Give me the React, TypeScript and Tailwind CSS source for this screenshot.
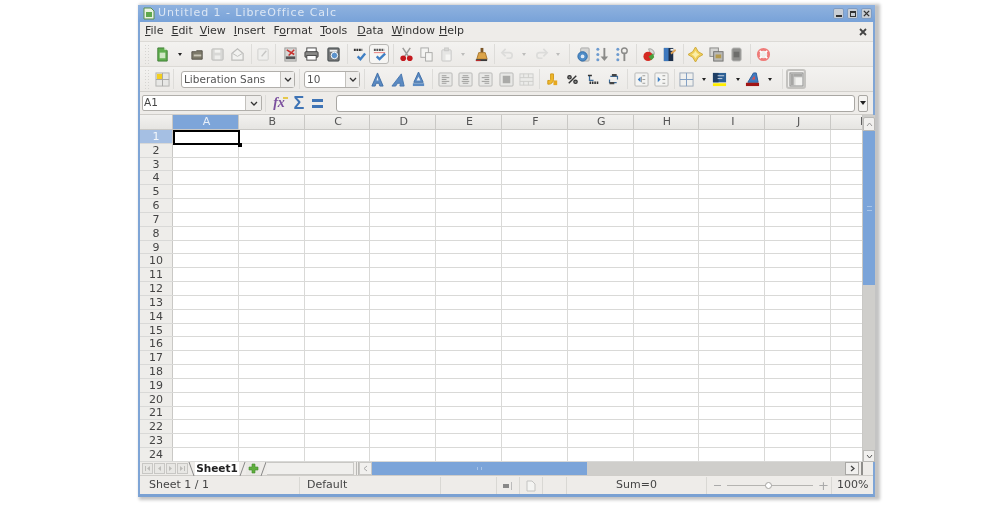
import React from "react";

const S = ({ children }: { children: React.ReactNode }) => (
  <svg width="15" height="15" viewBox="0 0 16 16" fill="none">{children}</svg>
);

const icons: Record<string, React.ReactNode> = {
  newdoc: <S><path d="M3 1h7l3 3v11H3z" fill="#5fae4e" stroke="#3f7d35" /><rect x="5" y="6" width="6" height="6" fill="#cfe8c4" /><path d="M10 0l3 3h-3z" fill="#e8f4e0" /></S>,
  open: <S><path d="M2 5h4l1-1h6v9H2z" fill="#7d7a6a" stroke="#55534a" /><rect x="4" y="8" width="8" height="2" fill="#c9c6b8" /></S>,
  save: <S><rect x="2" y="2" width="12" height="12" rx="1" fill="#d8d8d6" stroke="#bcbcba" /><rect x="5" y="3" width="6" height="3" fill="#f2f2f0" /><rect x="5" y="9" width="6" height="4" fill="#eeeeec" /></S>,
  mail: <S><path d="M2 7l6-5 6 5v7H2z" fill="#f2f2f0" stroke="#bdbdbb" strokeWidth="1.3" /><path d="M3 7l5 3 5-3" stroke="#bdbdbb" /></S>,
  edit: <S><rect x="2" y="2" width="11" height="12" rx="1" fill="#efefed" stroke="#cfcfcd" /><path d="M6 10l5-6" stroke="#c6c6c4" strokeWidth="1.5" /></S>,
  pdf: <S><rect x="2" y="1" width="12" height="14" fill="#d7d7d5" stroke="#9a9a98" /><path d="M4 3l8 5M12 3L6 9" stroke="#c8302c" strokeWidth="1.6" /><rect x="3" y="10" width="10" height="3" fill="#555" /></S>,
  print: <S><rect x="3" y="1" width="10" height="5" fill="#fff" stroke="#444" /><rect x="1" y="5" width="14" height="6" rx="1" fill="#8a8a88" stroke="#3e3e3e" /><rect x="3" y="9" width="10" height="5" fill="#fff" stroke="#444" /></S>,
  preview: <S><rect x="2" y="1" width="12" height="14" rx="1" fill="#77797a" stroke="#3e4448" /><circle cx="9" cy="9" r="3.5" fill="#5d93cc" stroke="#fff" /><rect x="4" y="3" width="8" height="2" fill="#eee" /></S>,
  spell: <S><path d="M2 3h9" stroke="#333" strokeWidth="2.5" strokeDasharray="2 .7" /><path d="M6 10l3 3 5-6" stroke="#3f7fc4" strokeWidth="2.5" /></S>,
  autospell: <S><path d="M2 3h11" stroke="#555" strokeWidth="2.5" strokeDasharray="2 .7" /><path d="M2 6h12" stroke="#e57a78" strokeWidth="1" /><path d="M5 10l3 3 6-6" stroke="#3f7fc4" strokeWidth="2.5" /></S>,
  cut: <S><path d="M4 1l6 9M12 1L6 10" stroke="#9c9c9a" strokeWidth="1.6" /><circle cx="4.5" cy="12" r="3" fill="#c4191e" /><circle cx="11.5" cy="12" r="3" fill="#c4191e" /></S>,
  copy: <S><rect x="2" y="1" width="8" height="10" fill="#f4f4f2" stroke="#a9a9a7" /><rect x="7" y="6" width="7" height="9" fill="#f4f4f2" stroke="#a9a9a7" /></S>,
  paste: <S><rect x="3" y="3" width="10" height="12" rx="1" fill="#e6e6e4" stroke="#c9c9c7" /><rect x="6" y="1" width="4" height="3" fill="#d8d8d6" stroke="#c9c9c7" /><rect x="7" y="8" width="5" height="6" fill="#f6f6f4" /></S>,
  brush: <S><rect x="7" y="1" width="3" height="5" fill="#7b5526" /><path d="M5 6h7l2 7H3z" fill="#dca449" stroke="#a8762c" /><path d="M2 13h12v2H2z" fill="#3a3a3a" /><path d="M2 14h5v1H2z" fill="#c92a2a" /></S>,
  undo: <S><path d="M3 6h7a3 3 0 010 6H7" stroke="#dcdcda" strokeWidth="1.8" /><path d="M6 2L2 6l4 4" stroke="#dcdcda" strokeWidth="1.8" /></S>,
  redo: <S><path d="M13 6H6a3 3 0 000 6h3" stroke="#dcdcda" strokeWidth="1.8" /><path d="M10 2l4 4-4 4" stroke="#dcdcda" strokeWidth="1.8" /></S>,
  nav: <S><rect x="5" y="1" width="9" height="14" rx="1" fill="#d6d6d4" stroke="#a9a9a7" /><circle cx="7" cy="10" r="5" fill="#4f8cc7" stroke="#2f6ba7" /><circle cx="7" cy="10" r="2" fill="#dfe9f4" /></S>,
  sortasc: <S><circle cx="3" cy="2.5" r="1.6" fill="#6d9bd0" /><circle cx="3" cy="8" r="1.6" fill="#6d9bd0" /><circle cx="3" cy="13.5" r="1.6" fill="#6d9bd0" /><path d="M10 1v11" stroke="#8a8a88" strokeWidth="2" /><path d="M6 10l4 5 4-5z" fill="#8a8a88" /></S>,
  sortdesc: <S><circle cx="3" cy="2.5" r="1.6" fill="#6d9bd0" /><circle cx="3" cy="8" r="1.6" fill="#6d9bd0" /><circle cx="3" cy="13.5" r="1.6" fill="#6d9bd0" /><path d="M10 6v9" stroke="#8a8a88" strokeWidth="2" /><circle cx="10" cy="4" r="3" stroke="#8a8a88" strokeWidth="1.5" /></S>,
  chart: <S><path d="M7 2a5 5 0 016 6l-4-1z" fill="#d9d9d7" stroke="#a5a5a3" /><circle cx="6.5" cy="10" r="5" fill="#d42a22" /><path d="M7 10l5-3 1 4-3 3z" fill="#4aa03e" /></S>,
  table: <S><rect x="2" y="1" width="10" height="14" fill="#1d2f4a" /><path d="M2 1h5v14H2z" fill="#3e78bd" /><path d="M9 6l5-4 1 2-5 4z" fill="#e0a458" /><rect x="9" y="2" width="3" height="2" fill="#f2f2f0" /></S>,
  star: <S><path d="M8 0l3 5 5 3-5 3-3 5-3-5-5-3 5-3z" fill="#f0cf5a" stroke="#cda93a" /><path d="M8 4l1.500 2.500L12 8l-2.500 1.500L8 12 6.500 9.500 4 8l2.500-1.500z" fill="#fbeea8" /></S>,
  gallery: <S><rect x="1" y="1" width="9" height="9" fill="#d6d6d4" stroke="#878785" /><rect x="5" y="5" width="10" height="10" fill="#b9b9b7" stroke="#70706e" /><rect x="7" y="8" width="6" height="4" fill="#b49a4d" /></S>,
  db: <S><rect x="3" y="1" width="10" height="14" rx="2" fill="#8e8e8c" stroke="#bdbdbb" /><rect x="5" y="5" width="6" height="6" fill="#6d6d6b" /></S>,
  help: <S><circle cx="8" cy="8" r="5.500" stroke="#ef7b78" strokeWidth="3" /><path d="M4 4l2 2m4 4l2 2M12 4l-2 2M6 10l-2 2" stroke="#fff" strokeWidth="1.8" /></S>,
  styles: <S><rect x="1" y="1" width="14" height="14" fill="#e7e7e5" stroke="#b1b1af" /><rect x="2" y="2" width="6" height="6" fill="#f3cf1f" /><path d="M8 1v14M1 8h14" stroke="#a5a5a3" /></S>,
  bold: <S><path d="M8 1L2 15h3.500l1-3h3l1 3H14z" fill="#5b8ac2" stroke="#3f6ea6" /><path d="M8 5l-1 4h2z" fill="#e6eef7" /></S>,
  italic: <S><path d="M11 2L1 15h4l2-3h3l-.5 3H14z" fill="#5b8ac2" stroke="#4776ae" /></S>,
  under: <S><path d="M8 0L3 11h10z" fill="#5b8ac2" stroke="#3f6ea6" /><path d="M8 5l-2 4h4z" fill="#e6eef7" /><rect x="2" y="12" width="12" height="3" fill="#5b8ac2" /></S>,
  alignl: <S><rect x="1" y="1" width="14" height="14" rx="1" fill="#e8e8e6" stroke="#b7b7b5" /><path d="M4 4h5M4 6h8M4 8h5M4 10h8M4 12h5" stroke="#9a9a98" /></S>,
  alignc: <S><rect x="1" y="1" width="14" height="14" rx="1" fill="#e8e8e6" stroke="#b7b7b5" /><path d="M5 4h6M4 6h8M5 8h6M4 10h8M5 12h6" stroke="#9a9a98" /></S>,
  alignr: <S><rect x="1" y="1" width="14" height="14" rx="1" fill="#e8e8e6" stroke="#b7b7b5" /><path d="M7 4h5M4 6h8M7 8h5M4 10h8M7 12h5" stroke="#9a9a98" /></S>,
  alignj: <S><rect x="1" y="1" width="14" height="14" rx="1" fill="#e8e8e6" stroke="#b7b7b5" /><rect x="4" y="4" width="8" height="8" fill="#aaaaa8" /></S>,
  merge: <S><rect x="1" y="2" width="14" height="12" fill="#ebebe9" stroke="#cdcdcb" /><path d="M1 6h14M1 10h14M5 2v4M10 2v4M5 10v4M10 10v4" stroke="#cdcdcb" /></S>,
  currency: <S><path d="M6 2h3v6a5 5 0 01-5 5H3V9h2a1 1 0 001-1z" fill="#f0b92d" stroke="#cf9512" /><rect x="9" y="9" width="4" height="5" fill="#e6a81f" /></S>,
  percent: <S><circle cx="4" cy="5" r="2.300" stroke="#333" strokeWidth="1.600" fill="#888" /><circle cx="12" cy="11" r="2.300" stroke="#333" strokeWidth="1.600" fill="#888" /><path d="M13 3L3 13" stroke="#333" strokeWidth="1.800" /></S>,
  numfmt: <S><path d="M3 3v6h5" stroke="#3a6b9c" strokeWidth="1.600" /><path d="M1 2h5v2H1z" fill="#333" /><path d="M3 12h11" stroke="#333" strokeWidth="3" strokeDasharray="2 1" /></S>,
  thousands: <S><path d="M4 4h9v4M12 12H3V8" stroke="#3a6b9c" strokeWidth="1.500" /><path d="M6 1h6v3H6zM3 11h6v3H3z" fill="#444" /></S>,
  indentl: <S><rect x="1" y="1" width="14" height="14" rx="1" fill="#f4f4f2" stroke="#b7b7b5" /><path d="M8 5v6M9 4h3M9 8h3M9 12h3" stroke="#9a9a98" /><path d="M7 5L4 8l3 3z" fill="#3f7fc4" /></S>,
  indentr: <S><rect x="1" y="1" width="14" height="14" rx="1" fill="#f4f4f2" stroke="#b7b7b5" /><path d="M9 4h3M9 8h3M9 12h3" stroke="#9a9a98" /><path d="M4 5l3 3-3 3z" fill="#3f7fc4" /></S>,
  border: <S><rect x="1" y="1" width="14" height="14" fill="#f0f0ee" stroke="#9aa8b8" /><path d="M8 1v14M1 8h14" stroke="#7d9cc2" /></S>,
  bg: <S><rect x="1" y="1" width="14" height="10" fill="#2d5f94" /><path d="M1 1h6v10H1z" fill="#1f3f66" /><path d="M6 4h7M6 7h5" stroke="#cfd8e4" /><rect x="1" y="12" width="14" height="3" fill="#ffee00" /></S>,
  fontc: <S><path d="M3 11L9 1h3l2 10z" fill="#3f7ac0" stroke="#2b5c99" /><path d="M7 8l3-4 1 4z" fill="#d9534f" /><rect x="1" y="11.500" width="14" height="3.500" fill="#a11414" /></S>,
  grid: <S><rect x="1" y="1" width="14" height="14" fill="#d9d9d7" stroke="#8c8c8a" /><rect x="2" y="2" width="3" height="12" fill="#a7a7a5" /><rect x="5" y="2" width="9" height="3" fill="#a7a7a5" /><rect x="7" y="6" width="7" height="8" fill="#f2f2f0" /></S>,
};

const Cell = ({ n, c = "" }: { n: string; c?: string }) => (
  <div className={`flex h-[20px] w-5 shrink-0 items-center justify-center ${c}`}>{icons[n]}</div>
);
const Sep = ({ c = "" }: { c?: string }) => <div className={`h-[20px] w-px shrink-0 bg-[#dddcd9] ${c}`} />;
const Arr = ({ c = "w-[14px]", dim = false }: { c?: string; dim?: boolean }) => (
  <div className={`flex h-[20px] shrink-0 items-center justify-center ${c}`}>
    <div className={`h-0 w-0 border-x-[2.5px] border-t-[3px] border-x-transparent ${dim ? "border-t-[#bdbdbb]" : "border-t-[#222]"}`} />
  </div>
);
const Grip = () => (
  <div className="ml-[4px] mr-[3px] h-[20px] w-[5px] shrink-0 bg-[radial-gradient(#d5d4d1_1px,transparent_1px)] bg-[length:3px_3px]" />
);
const Combo = ({ text, c, tw }: { text: string; c: string; tw: string }) => (
  <div className={`mt-[1px] flex h-[17px] shrink-0 rounded-[3px] border border-[#b1afab] bg-white ${c}`}>
    <div className={`flex items-center pl-[2px] text-[10.5px] text-[#555] ${tw}`}>{text}</div>
    <div className="flex flex-1 items-center justify-center border-l border-[#c3c1bd] bg-[#efeeec]">
      <svg width="8" height="5" viewBox="0 0 8 5"><path d="M1 1l3 3 3-3" stroke="#333" strokeWidth="1.300" fill="none" /></svg>
    </div>
  </div>
);

const menus: [string, string, string][] = [
  ["", "F", "ile"], ["", "E", "dit"], ["", "V", "iew"], ["", "I", "nsert"], ["F", "o", "rmat"],
  ["", "T", "ools"], ["", "D", "ata"], ["", "W", "indow"], ["", "H", "elp"],
];
const menuGaps = ["ml-[5px]", "ml-[8px]", "ml-[7px]", "ml-[8px]", "ml-[8px]", "ml-[8px]", "ml-[10px]", "ml-[8px]", "ml-[4px]"];
const cols = ["A", "B", "C", "D", "E", "F", "G", "H", "I", "J"];
const rows = Array.from({ length: 24 }, (_, i) => i + 1);

const WinBtn = ({ children }: { children: React.ReactNode }) => (
  <div className="flex h-[11px] w-[11px] items-center justify-center rounded-[2px] border border-[#7f9cc2] bg-[#c9ced5]">{children}</div>
);
const Nav = ({ d }: { d: string }) => (
  <div className="flex h-[11px] w-[11px] items-center justify-center border border-[#c8c7c4] bg-[#e8e7e4]">
    <svg width="7" height="7" viewBox="0 0 7 7"><path d={d} fill="#bdbcb9" /></svg>
  </div>
);
const St = ({ c, children }: { c: string; children?: React.ReactNode }) => (
  <div className={`flex h-full shrink-0 items-center border-r border-[#d9d8d4] ${c}`}>{children}</div>
);

export default function App() {
  return (
    <div className="h-[508px] w-[1008px] overflow-hidden bg-white blur-[0.7px] [font-family:'DejaVu_Sans',sans-serif]">
      <div className="ml-[138px] mt-[5px] flex h-[492px] w-[737px] flex-col border-x-2 border-b-[3px] border-x-[#7fa5d6] border-b-[#7aa1d3] bg-[#eeece9] shadow-[3px_1px_3px_2px_#c4c4c4]">
        <div className="-mx-[2px] flex h-[17px] shrink-0 items-center bg-[linear-gradient(#8fb2df,#78a2d8)] pl-[5px] pr-[3px]">
          <svg width="12" height="13" viewBox="0 0 12 13">
            <path d="M1 1h7l3 3v8H1z" fill="#e8f2e0" stroke="#5a8f4c" />
            <rect x="3" y="5" width="6" height="5" fill="#5ea84c" />
          </svg>
          <span className="ml-[3px] text-[11px] tracking-[0.95px] text-[#dbe6f4]">Untitled 1 - LibreOffice Calc</span>
          <div className="ml-auto flex gap-[3px]">
            <WinBtn><div className="mt-[4px] h-[2px] w-[6px] bg-[#333]" /></WinBtn>
            <WinBtn><div className="h-[6px] w-[6px] border border-t-2 border-[#333]" /></WinBtn>
            <WinBtn>
              <svg width="7" height="7" viewBox="0 0 8 8"><path d="M1 1l6 6M7 1L1 7" stroke="#333" strokeWidth="1.600" /></svg>
            </WinBtn>
          </div>
        </div>

        <div className="flex h-[20px] shrink-0 items-center border-b border-[#dcdad6] text-[11px] text-[#333]">
          {menus.map(([a, u, b], i) => (
            <span key={i} className={menuGaps[i]}>
              {a}
              <span className="underline">{u}</span>
              {b}
            </span>
          ))}
          <svg className="ml-auto mr-[6px]" width="8" height="8" viewBox="0 0 8 8"><path d="M1 1l6 6M7 1L1 7" stroke="#444" strokeWidth="1.800" /></svg>
        </div>

        <div className="flex h-[25px] shrink-0 items-center border-b border-[#dcdad6] bg-[linear-gradient(#f3f2f0,#eceae7)]">
          <Grip />
          <Cell n="newdoc" />
          <Arr c="w-[15px]" />
          <Cell n="open" />
          <Cell n="save" />
          <Cell n="mail" />
          <Sep c="ml-[4px] mr-[1px]" />
          <Cell n="edit" />
          <Sep c="ml-[2px] mr-[4px]" />
          <Cell n="pdf" />
          <Cell n="print" c="ml-[1px]" />
          <Cell n="preview" c="ml-[2px]" />
          <Sep c="ml-[4px] mr-[1px]" />
          <Cell n="spell" />
          <Cell n="autospell" c="rounded-[3px] border border-[#b9b8b5] bg-[#f6f5f3]" />
          <Sep c="ml-[4px] mr-[2px]" />
          <Cell n="cut" />
          <Cell n="copy" />
          <Cell n="paste" />
          <Arr dim />
          <Cell n="brush" c="ml-[1px]" />
          <Sep c="ml-[3px] mr-[2px]" />
          <Cell n="undo" />
          <Arr dim />
          <Cell n="redo" />
          <Arr dim />
          <Sep c="ml-[4px] mr-[3px]" />
          <Cell n="nav" />
          <Cell n="sortasc" c="!w-[19px]" />
          <Cell n="sortdesc" />
          <Sep c="ml-[4px] mr-[2px]" />
          <Cell n="chart" />
          <Cell n="table" />
          <Sep c="ml-[4px] mr-[1px]" />
          <Cell n="star" />
          <Cell n="gallery" c="ml-[1px]" />
          <Cell n="db" />
          <Sep c="ml-[4px] mr-[2px]" />
          <Cell n="help" />
        </div>

        <div className="flex h-[25px] shrink-0 items-center border-b border-[#d2d0cc] bg-[linear-gradient(#f3f2f0,#eceae7)]">
          <Grip />
          <Cell n="styles" />
          <Sep c="ml-[1px]" />
          <Combo text="Liberation Sans" c="ml-[7px] w-[114px]" tw="w-[98px]" />
          <Sep c="ml-[4px]" />
          <Combo text="10" c="ml-[4px] w-[56px]" tw="w-[40px]" />
          <Sep c="ml-[4px] mr-[2px]" />
          <Cell n="bold" />
          <Cell n="italic" c="ml-[1px]" />
          <Cell n="under" />
          <Sep c="ml-[4px] mr-[2px]" />
          <Cell n="alignl" />
          <Cell n="alignc" />
          <Cell n="alignr" />
          <Cell n="alignj" c="ml-[1px]" />
          <Cell n="merge" />
          <Sep c="ml-[3px] mr-[2px]" />
          <Cell n="currency" />
          <Cell n="percent" c="[&>svg]:scale-[0.8]" />
          <Cell n="numfmt" c="ml-[1px] [&>svg]:scale-[0.85]" />
          <Cell n="thousands" c="[&>svg]:scale-[0.85]" />
          <Sep c="ml-[4px] mr-[3px]" />
          <Cell n="indentl" />
          <Cell n="indentr" />
          <Sep c="ml-[3px] mr-[1px]" />
          <Cell n="border" />
          <Arr c="w-[15px] pl-[1px]" />
          <Cell n="bg" c="-ml-[2px]" />
          <Arr c="w-[15px] pl-[3px]" />
          <Cell n="fontc" c="-ml-[2px]" />
          <Arr c="w-[14px] pl-[1px]" />
          <Sep c="ml-[6px] mr-[3px]" />
          <Cell n="grid" c="rounded-[3px] border-2 border-[#c4c3c0] bg-[#f1f0ee]" />
        </div>

        <div className="flex h-[23px] shrink-0 items-center border-b border-[#cfcdc9]">
          <div className="ml-[2px] flex h-[16px] w-[120px] shrink-0 rounded-[2px] border border-[#b1afab] bg-white">
            <div className="flex w-[102px] items-center pl-[1px] text-[10.5px] text-[#444]">A1</div>
            <div className="flex flex-1 items-center justify-center border-l border-[#c3c1bd] bg-[#efeeec]">
              <svg width="8" height="5" viewBox="0 0 8 5"><path d="M1 1l3 3 3-3" stroke="#333" strokeWidth="1.300" fill="none" /></svg>
            </div>
          </div>
          <Sep c="ml-[3px] !h-[17px]" />
          <div className="ml-[3px] flex w-[63px] items-center">
            <span className="relative w-[20px] text-center text-[14px] font-bold italic leading-none text-[#7b4f9e] [font-family:'Liberation_Serif',serif]">
              fx
              <span className="absolute right-[1px] top-[1px] h-[2px] w-[5px] bg-[#e6c84a]" />
            </span>
            <span className="ml-[2px] w-[16px] text-center text-[18px] font-bold leading-none text-[#3f74b5] [font-family:'Liberation_Sans',sans-serif]">Σ</span>
            <div className="ml-[5px] flex w-[11px] flex-col gap-[3px]">
              <div className="h-[3px] bg-[#3f74b5]" />
              <div className="h-[3px] bg-[#3f74b5]" />
            </div>
          </div>
          <div className="ml-[4px] h-[17px] w-[519px] shrink-0 rounded-[3px] border border-[#a9a7a3] bg-white" />
          <div className="ml-[3px] flex h-[17px] w-[10px] shrink-0 items-center justify-center rounded-[2px] border border-[#a9a7a3] bg-[#f4f3f1]">
            <div className="h-0 w-0 border-x-[3px] border-t-[4px] border-x-transparent border-t-[#222]" />
          </div>
        </div>

        <div className="flex h-[347px] shrink-0">
          <div className="relative w-[722px] shrink-0 overflow-hidden">
            <div className="flex h-[15px] border-b border-[#c9c8c5] bg-[linear-gradient(#f2f1ef,#e6e5e2)]">
              <div className="w-[33px] shrink-0 border-r border-[#c9c8c5]" />
              {cols.map((c, i) => (
                <div
                  key={c}
                  className={`flex w-[65.8px] shrink-0 items-center justify-center border-r border-[#c9c8c5] pl-[2px] text-[11px] ${i === 0 ? "bg-[#7da5d9] text-[#e9f0f9]" : "text-[#555]"}`}
                >
                  {c}
                </div>
              ))}
              <div className="flex-1 pl-[29px] text-[11px] leading-[14px] text-[#555]">K</div>
            </div>
            {rows.map((r) => (
              <div key={r} className="flex h-[13.83px] border-b border-[#d9d9d7] bg-white">
                <div className={`flex w-[33px] shrink-0 items-center justify-center border-r border-[#c9c8c5] text-[11px] leading-none ${r === 1 ? "bg-[#a5bfe3] text-[#f4f7fb]" : "bg-[#eeedea] text-[#444]"}`}>
                  {r}
                </div>
                {cols.map((c) => (
                  <div key={c} className="w-[65.8px] shrink-0 border-r border-[#d9d9d7]" />
                ))}
              </div>
            ))}
            <div className="absolute left-[33px] top-[15px] h-[15px] w-[67px] border-2 border-black" />
            <div className="absolute left-[98px] top-[28px] h-[4px] w-[4px] bg-black" />
          </div>
          <div className="flex w-[13px] shrink-0 flex-col border-l border-[#c9c8c5] bg-[#cfcecb]">
            <div className="mt-[2px] flex h-[14px] shrink-0 items-center justify-center rounded-t-[2px] border border-[#bab9b6] bg-[#f1f0ee]">
              <svg width="7" height="5" viewBox="0 0 7 5"><path d="M1 4l2.500-3L6 4" stroke="#999" fill="none" /></svg>
            </div>
            <div className="flex h-[154px] shrink-0 items-center justify-center bg-[#7ba4d9]">
              <div className="h-[5px] w-[5px] border-y border-[#a8c4e7]" />
            </div>
            <div className="flex-1" />
            <div className="flex h-[12px] shrink-0 items-center justify-center border border-[#bab9b6] bg-[#f1f0ee]">
              <svg width="7" height="5" viewBox="0 0 7 5"><path d="M1 1l2.500 3L6 1" stroke="#555" fill="none" /></svg>
            </div>
          </div>
        </div>

        <div className="flex h-[14px] shrink-0 items-center border-b border-[#cfcdc9] bg-[#eeece9]">
          <div className="ml-[2px] flex w-[46px] shrink-0 gap-px">
            <Nav d="M1 1h1v5H1zM6 1v5L3 3.500z" />
            <Nav d="M5 1v5L2 3.500z" />
            <Nav d="M2 1v5l3-2.500z" />
            <Nav d="M6 1h-1v5h1zM1 1v5l3-2.500z" />
          </div>
          <svg className="shrink-0" width="7" height="14" viewBox="0 0 7 14"><path d="M1 0l5 14" stroke="#888" /></svg>
          <div className="flex h-full w-[44px] shrink-0 items-center justify-center bg-white text-[10.5px] font-bold leading-none text-[#222]">
            Sheet1
          </div>
          <svg className="shrink-0" width="7" height="14" viewBox="0 0 7 14"><path d="M1 14L6 0" stroke="#888" /></svg>
          <div className="flex h-full w-[14px] shrink-0 items-center justify-center bg-[#e9e8e5]">
            <svg width="11" height="11" viewBox="0 0 11 11"><path d="M4 1h3v3h3v3H7v3H4V7H1V4h3z" fill="#5fae3e" stroke="#3f8a2a" strokeWidth=".6" /></svg>
          </div>
          <svg className="shrink-0" width="7" height="14" viewBox="0 0 7 14"><path d="M1 14L6 0" stroke="#888" /></svg>
          <div className="h-full w-[87px] shrink-0 border-y border-r border-[#c9c8c5] bg-[#f0efed]" />
          <div className="ml-[2px] h-full w-[3px] shrink-0 border-x border-[#bab9b6]" />
          <div className="flex h-full w-[13px] shrink-0 items-center justify-center border border-[#c9c8c5] bg-[#f1f0ee]">
            <svg width="5" height="7" viewBox="0 0 5 7"><path d="M4 1L1 3.500 4 6" stroke="#aaa" fill="none" /></svg>
          </div>
          <div className="flex h-full w-[215px] shrink-0 items-center justify-center bg-[#7ba4d9]">
            <div className="h-[3px] w-[5px] border-x border-[#a8c4e7]" />
          </div>
          <div className="h-full w-[258px] shrink-0 bg-[#cfcecb]" />
          <div className="flex h-full w-[14px] shrink-0 items-center justify-center border border-[#a9a8a5] bg-[#f1f0ee]">
            <svg width="5" height="7" viewBox="0 0 5 7"><path d="M1 1l3 2.500L1 6" stroke="#444" strokeWidth="1.300" fill="none" /></svg>
          </div>
          <div className="ml-[2px] h-full w-[2px] bg-[#8f8e8b]" />
        </div>

        <div className="flex h-[18px] shrink-0 items-center pt-px text-[11px] text-[#444]">
          <St c="w-[160px] pl-[9px]">Sheet 1 / 1</St>
          <St c="w-[141px] pl-[7px]">Default</St>
          <St c="w-[56px]" />
          <St c="w-[23px] justify-center">
            <svg width="10" height="8" viewBox="0 0 10 8"><rect x="0" y="2" width="6" height="4" fill="#888" /><path d="M8.500 0v8" stroke="#bbb" /></svg>
          </St>
          <St c="w-[23px] justify-center">
            <svg width="10" height="12" viewBox="0 0 10 12"><path d="M1 1h5l3 3v7H1z" fill="#f4f4f2" stroke="#c4c4c2" /></svg>
          </St>
          <St c="w-[24px]" />
          <St c="w-[140px] justify-center">Sum=0</St>
          <St c="w-[125px] pl-[7px]">
            <div className="h-[1.5px] w-[7px] bg-[#aaa]" />
            <div className="relative ml-[6px] h-px w-[86px] bg-[#b5b4b1]">
              <div className="absolute left-[38px] top-[-3px] h-[7px] w-[7px] rounded-full border border-[#a5a4a1] bg-white" />
            </div>
            <span className="ml-[5px] text-[13px] leading-none text-[#aaa]">+</span>
          </St>
          <div className="pl-[5px]">100%</div>
        </div>
      </div>
    </div>
  );
}
